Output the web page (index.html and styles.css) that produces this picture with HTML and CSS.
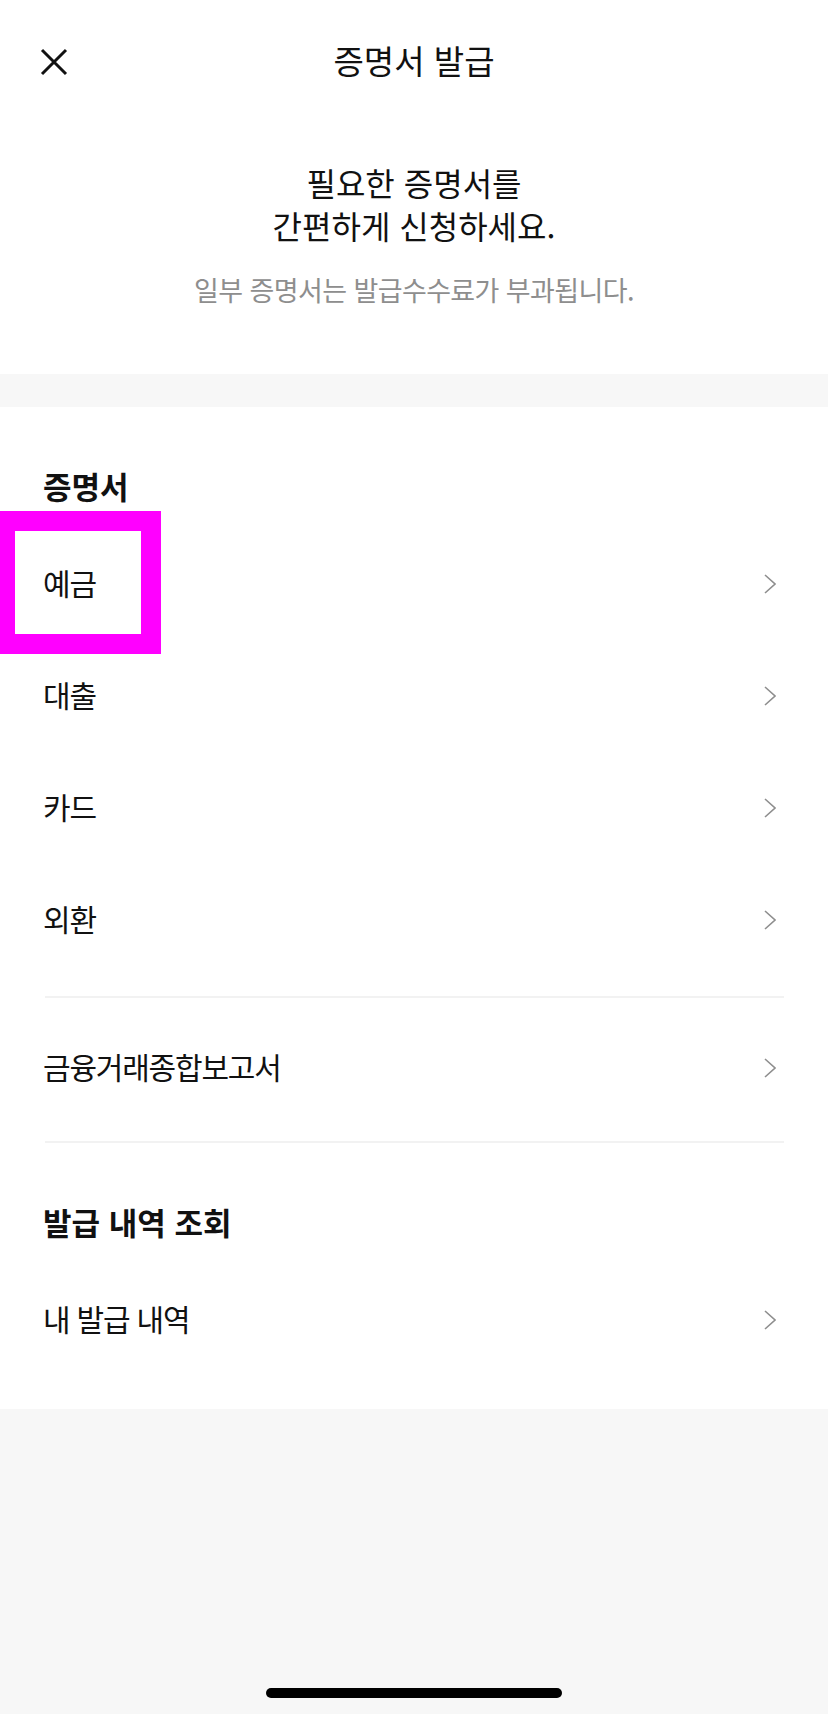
FILE: index.html
```html
<!DOCTYPE html>
<html lang="ko">
<head>
  <meta charset="UTF-8" />
  <meta name="viewport" content="width=device-width, initial-scale=1.0"/>
  <title>증명서 발급</title>
  <link rel="stylesheet" href="styles.css">
</head>
<body>
  <div class="screen">
    <header class="navbar">
      <button class="close" aria-label="닫기">
        <svg width="28" height="28" viewBox="0 0 28 28">
          <path d="M2 2 L26 26 M26 2 L2 26" stroke="#111" stroke-width="3" fill="none"/>
        </svg>
      </button>
      <h1 class="nav-title">증명서 발급</h1>
      <span></span>
    </header>

    <section class="intro">
      <p class="intro-title">필요한 증명서를<br>간편하게 신청하세요.</p>
      <p class="intro-note">일부 증명서는 발급수수료가 부과됩니다.</p>
    </section>

    <div class="gap"></div>

    <!-- 증명서 -->
    <section class="menu">
      <h2 class="menu-head">증명서</h2>
      <ul class="menu-list">
        <li class="menu-item">
          <span>예금</span>
          <svg class="chev" width="12" height="20" viewBox="0 0 12 20"><path d="M1 1 L11 10 L1 19" stroke="#8e8e8e" stroke-width="1.6" fill="none"/></svg>
          <span class="highlight"></span>
        </li>
        <li class="menu-item">
          <span>대출</span>
          <svg class="chev" width="12" height="20" viewBox="0 0 12 20"><path d="M1 1 L11 10 L1 19" stroke="#8e8e8e" stroke-width="1.6" fill="none"/></svg>
        </li>
        <li class="menu-item">
          <span>카드</span>
          <svg class="chev" width="12" height="20" viewBox="0 0 12 20"><path d="M1 1 L11 10 L1 19" stroke="#8e8e8e" stroke-width="1.6" fill="none"/></svg>
        </li>
        <li class="menu-item">
          <span>외환</span>
          <svg class="chev" width="12" height="20" viewBox="0 0 12 20"><path d="M1 1 L11 10 L1 19" stroke="#8e8e8e" stroke-width="1.6" fill="none"/></svg>
        </li>
      </ul>
      <ul class="menu-list split">
        <li class="menu-item">
          <span>금융거래종합보고서</span>
          <svg class="chev" width="12" height="20" viewBox="0 0 12 20"><path d="M1 1 L11 10 L1 19" stroke="#8e8e8e" stroke-width="1.6" fill="none"/></svg>
        </li>
      </ul>
    </section>

    <!-- 발급 내역 -->
    <section class="menu last">
      <h2 class="menu-head">발급 내역 조회</h2>
      <ul class="menu-list">
        <li class="menu-item">
          <span>내 발급 내역</span>
          <svg class="chev" width="12" height="20" viewBox="0 0 12 20"><path d="M1 1 L11 10 L1 19" stroke="#8e8e8e" stroke-width="1.6" fill="none"/></svg>
        </li>
      </ul>
    </section>

    <div class="home-bar"></div>
  </div>
</body>
</html>
```

FILE: styles.css
```css
:root {
  --text: #111;
  --sub: #8e8e8e;
  --background: #f7f7f7;
  --card: #fff;
  --line: #f2f2f2;
}

* {
  box-sizing: border-box;
  font-family: "Noto Sans CJK KR", "Noto Sans", sans-serif;
}

body {
  margin: 0;
  padding: 0;
  background: var(--background);
  color: var(--text);
}

.screen {
  width: 828px;
  min-height: 1714px;
  overflow: hidden;
  background: var(--background);
}

.navbar {
  display: grid;
  grid-template-columns: 1fr auto 1fr;
  align-items: center;
  height: 124px;
  background: var(--card);
}

.close {
  justify-self: start;
  margin-left: 40px;
  padding: 0;
  border: none;
  background: none;
  width: 28px;
  height: 28px;
  display: flex;
}

.nav-title {
  margin: 0 0 5px;
  font-size: 33px;
  font-weight: 400;
  letter-spacing: 0;
  line-height: 40px;
}

.intro {
  background: var(--card);
  text-align: center;
  padding: 37px 0 67px;
}

.intro-title {
  margin: 0;
  font-size: 32px;
  line-height: 43px;
  letter-spacing: 0;
}

.intro-note {
  margin: 26px 0 0;
  font-size: 27px;
  line-height: 34px;
  letter-spacing: -0.6px;
  color: var(--sub);
}

.gap {
  height: 33px;
}

.menu {
  background: var(--card);
  padding: 59px 44px 0 43px;
}

.menu.last {
  padding-bottom: 33px;
}

.menu-head {
  margin: 0 0 22px;
  font-size: 31px;
  line-height: 40px;
  font-weight: 700;
  letter-spacing: 0;
}

.menu-list {
  list-style: none;
  margin: 0;
  padding: 0;
}

.menu-list.split {
  margin-top: 20px;
  margin-left: 2px;
  padding: 14px 0 17px;
  border-top: 2px solid var(--line);
  border-bottom: 2px solid var(--line);
}

.menu-list.split .menu-item {
  margin-left: -2px;
}

.menu-item {
  position: relative;
  display: flex;
  align-items: center;
  justify-content: space-between;
  height: 112px;
  padding-bottom: 5px;
  font-size: 30px;
  letter-spacing: -1.2px;
}

.chev {
  margin: 5px 8px 0 0;
}

/* annotation box over the first row */
.highlight {
  position: absolute;
  left: -48px;
  top: -17px;
  width: 166px;
  height: 143px;
  border: 20px solid #ff00ff;
}

.home-bar {
  width: 296px;
  height: 10px;
  margin: 279px auto 0;
  border-radius: 5px;
  background: #000;
}
```
